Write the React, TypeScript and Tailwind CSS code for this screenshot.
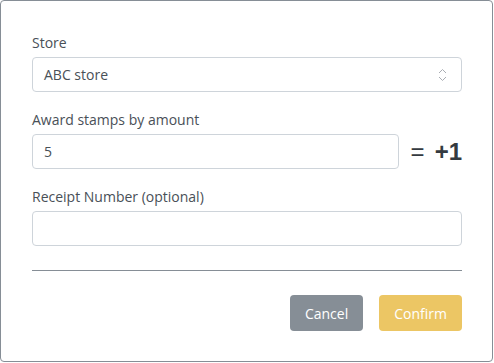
import React from 'react';

const LABEL_CLS = 'block text-[14px] leading-[21px] text-[#495057] mb-1';
const FIELD_CLS =
  'w-full h-[35px] border border-[#ced4da] rounded-[4px] pl-[11px] pr-3 text-[14px] leading-[21px] text-[#495057] bg-white outline-none';

function SelectArrows() {
  return (
    <svg width="9" height="14" viewBox="0 0 9 14" aria-hidden className="shrink-0">
      <path d="M1 5 L4.5 1.5 L8 5" fill="none" stroke="#a9adb3" strokeWidth="1" />
      <path d="M1 9 L4.5 12.5 L8 9" fill="none" stroke="#a9adb3" strokeWidth="1" />
    </svg>
  );
}

export default function App() {
  return (
    <div className="w-[494px] h-[363px] bg-white">
      <div className="w-[493px] border border-[#868e96] rounded-[4px] pl-[31px] pr-[30px] pt-[31px] pb-[30px] font-['Open_Sans',sans-serif]">
        <div>
          <label className={LABEL_CLS}>Store</label>
          <div className={`${FIELD_CLS} flex items-center justify-between pr-[14px]`}>
            <span>ABC store</span>
            <SelectArrows />
          </div>
        </div>

        <div className="mt-[17px]">
          <label className={LABEL_CLS}>Award stamps by amount</label>
          <div className="flex items-center">
            <input className={`${FIELD_CLS} flex-1 w-auto min-w-0`} defaultValue="5" />
            <div className="flex items-center gap-[10px] ml-3 font-['Liberation_Sans',Arial,sans-serif] text-[24px] leading-none text-[#343a40]">
              <span>=</span>
              <span className="font-bold">+1</span>
            </div>
          </div>
        </div>

        <div className="mt-[17px]">
          <label className={LABEL_CLS}>Receipt Number (optional)</label>
          <input className={FIELD_CLS} />
        </div>

        <hr className="mt-6 border-0 border-t border-[#868e96]" />

        <div className="flex justify-end gap-4 mt-6">
          <button className="h-9 px-[15px] rounded-[4px] bg-[#868e96] text-white text-[14px] leading-[21px]">
            Cancel
          </button>
          <button className="h-9 px-[15px] rounded-[4px] bg-[#ecc664] text-white text-[14px] leading-[21px]">
            Confirm
          </button>
        </div>
      </div>
    </div>
  );
}
